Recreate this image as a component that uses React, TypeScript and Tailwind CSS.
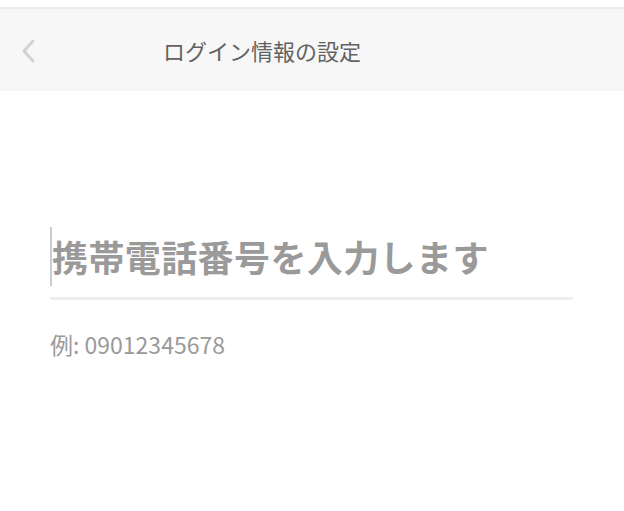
import React from "react";

export default function App() {
  const jp = { fontFamily: '"Noto Sans CJK JP", "Noto Sans", sans-serif' };
  return (
    <div className="w-[624px] h-[511px] bg-white overflow-hidden" style={jp}>
      <div className="h-[7px] bg-white" />
      <div className="h-[2px] bg-[#ececec]" />
      <div className="h-[82px] bg-[#f7f7f7] flex items-center relative">
        <div className="w-[60px] flex items-center pl-[19px] pt-[2px]">
          <svg width="18" height="26" viewBox="0 0 18 26" fill="none">
            <path d="M14 3 L5 13 L14 23" stroke="#d2d2d2" strokeWidth="3" strokeLinecap="round" strokeLinejoin="round" />
          </svg>
        </div>
        <div className="pl-[103px] text-[22px] text-[#626262] leading-none">ログイン情報の設定</div>
      </div>
      <div className="pt-[135px] pl-[50px] w-[573px]">
        <div className="flex items-center h-[60px] relative">
          <div className="w-[2px] h-[59px] bg-[#c9cbd6]" />
          <div className="text-[36px] font-bold text-[#9a9a9a] leading-none tracking-[0.4px]">携帯電話番号を入力します</div>
        </div>
        <div className="mt-[11px] h-[3px] bg-[#efefef]" />
        <div className="mt-[33px] text-[23px] text-[#9a9a9a] leading-none">例: 09012345678</div>
      </div>
    </div>
  );
}
